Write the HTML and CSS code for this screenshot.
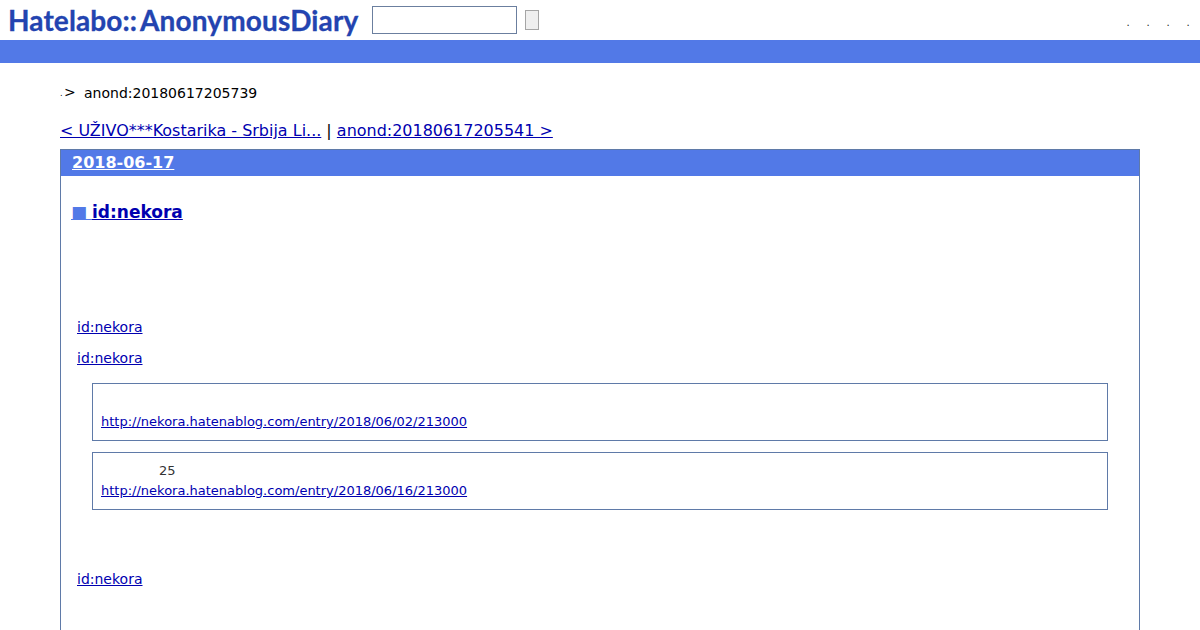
FILE: index.html
```html
<!DOCTYPE html>
<html lang="ja">
<head>
<meta charset="utf-8">
<title>anond:20180617205739</title>
<link rel="stylesheet" href="styles.css">
</head>
<body>
<header class="top">
  <a class="logo"><span class="logo-a">Hatelabo::</span><span class="logo-b">AnonymousDiary</span></a>
  <form class="search">
    <input class="search-input" type="text">
    <button class="search-btn" type="button"></button>
  </form>
  <nav class="toplinks"><span>.</span><span>.</span><span>.</span><span>.</span></nav>
</header>
<div class="bar"></div>
<main class="content">
  <p class="crumb"><span class="dot">.</span><span class="gt">&gt;</span><span class="crumb-id">anond:20180617205739</span></p>
  <p class="pager"><a href="#">&lt; UŽIVO***Kostarika - Srbija Li...</a> | <a href="#">anond:20180617205541 &gt;</a></p>
  <section class="day">
    <h2 class="day-title"><a href="#">2018-06-17</a></h2>
    <div class="day-body">
      <h3 class="entry-title"><a class="mark" href="#">■ </a><a href="#">id:nekora</a></h3>
      <p class="line first"><a href="#">id:nekora</a></p>
      <p class="line"><a href="#">id:nekora</a></p>
      <blockquote class="quote"><p class="quote-text"></p><a href="#">http://nekora.hatenablog.com/entry/2018/06/02/213000</a></blockquote>
      <blockquote class="quote"><p class="quote-text indent">25</p><a href="#">http://nekora.hatenablog.com/entry/2018/06/16/213000</a></blockquote>
      <p class="line last"><a href="#">id:nekora</a></p>
    </div>
  </section>
</main>
</body>
</html>
```
FILE: styles.css
```css
html, body { margin: 0; padding: 0; }
body {
  background: #fff;
  color: #000;
  font-family: "DejaVu Sans", sans-serif;
  height: 630px;
  overflow: hidden;
}
a { color: #0000b0; text-decoration: underline; }
.top {
  height: 40px;
  display: flex;
  align-items: flex-start;
}
.logo {
  margin: 3px 0 0 8px;
  width: 351px;
  font-family: "Lato", sans-serif;
  font-weight: 700;
  font-size: 28px;
  line-height: 34px;
  color: #2344b0;
  text-decoration: none;
  white-space: nowrap;
  -webkit-text-stroke: 0.3px #2344b0;
}
.logo-a { letter-spacing: 0.1px; margin-right: 3px; }
.logo-b { letter-spacing: 0.15px; }
.search { display: flex; align-items: center; margin: 6px 0 0 13px; gap: 8px; }
.search-input {
  box-sizing: border-box;
  width: 145px;
  height: 28px;
  margin: 0;
  padding: 0;
  border: 1px solid #6b7f9f;
  background: #fff;
}
.search-btn {
  box-sizing: border-box;
  width: 14px;
  height: 20px;
  margin: 0;
  padding: 0;
  background: #efefef;
  border: 1px solid #a5a5a5;
  border-radius: 0;
}
.toplinks {
  margin-left: auto;
  margin-right: 10px;
  display: flex;
  gap: 16px;
  margin-top: 16px;
  font-size: 10px;
  line-height: 14px;
  color: #222;
}
.toplinks span { width: 4px; text-align: center; }
.bar { height: 23px; background: #5279e7; }
.content { margin: 0 60px; }
.crumb {
  margin: 0;
  padding-top: 21px;
  height: 18px;
  font-size: 14px;
  line-height: 18px;
  display: flex;
  align-items: center;
}
.dot { font-size: 8px; width: 4px; align-self: flex-end; line-height: 16px; }
.gt { width: 20px; position: relative; top: -1px; }
.pager {
  margin: 0;
  padding-top: 19px;
  font-size: 15.98px;
  line-height: 20px;
  height: 20px;
  white-space: nowrap;
}
.day {
  margin-top: 8px;
  border: 1px solid #5f7aa8;
  border-bottom: 0;
  min-height: 500px;
}
.day-title {
  margin: 0;
  height: 26px;
  padding-left: 11px;
  background: #5279e7;
  font-size: 16px;
  line-height: 26px;
  font-weight: 700;
}
.day-title a { color: #fff; }
.day-body { padding: 0 31px 0 11px; }
.entry-title {
  margin: 0 0 0 -1px;
  padding-top: 26px;
  height: 20px;
  font-size: 17px;
  line-height: 20px;
  font-weight: 700;
}
.mark { color: #5279e7; word-spacing: -1px; }
.line {
  margin: 0 0 0 5px;
  padding-top: 13px;
  font-size: 14px;
  line-height: 18px;
}
.line.first { padding-top: 96px; }
.quote {
  margin: 16px 0 0 20px;
  box-sizing: border-box;
  height: 58px;
  padding: 8px 8px 0;
  border: 1px solid #5f7aa8;
  font-size: 13px;
  line-height: 20px;
  color: #333;
}
.quote + .quote { margin-top: 11px; }
.quote-text { margin: 0; height: 20px; }
.indent { padding-left: 58px; }
.line.last { padding-top: 60px; }
```
